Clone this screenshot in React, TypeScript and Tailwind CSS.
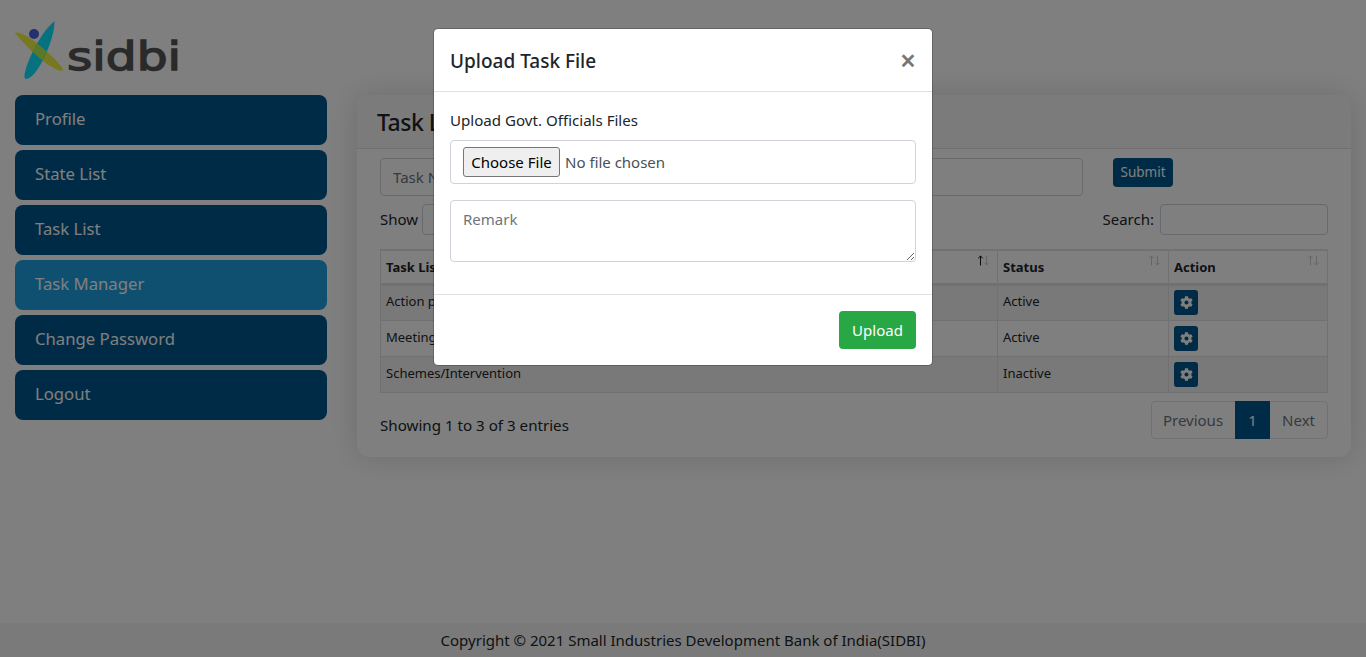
import { FaCog } from 'react-icons/fa';

const navItems = ['Profile', 'State List', 'Task List', 'Task Manager', 'Change Password', 'Logout'];

const rows = [
  { name: 'Action plan', status: 'Active' },
  { name: 'Meeting', status: 'Active' },
  { name: 'Schemes/Intervention', status: 'Inactive' },
];

function SortArrows({ active }: { active?: boolean }) {
  return (
    <svg width="13" height="11" viewBox="0 0 13 11" fill="none" strokeWidth="1" className="absolute right-[7px] top-[4px]">
      <path d="M3.5 10.5V1M1.2 3.3 3.5 1l2.3 2.3" stroke={active ? '#111' : '#ccc'} />
      <path d="M9.5.5V10M7.2 7.7 9.5 10l2.3-2.3" stroke="#ccc" />
    </svg>
  );
}

function Logo() {
  const teal = 'M39.5 4C40 22 22 62 11 62C4 62 22 18 39.5 4Z';
  const olive = 'M0 16C8 12 40 40 48 52C50 58 28 50 0 16Z';
  return (
    <svg width="170" height="65" viewBox="0 0 170 65" className="block">
      <defs>
        <clipPath id="logo-teal">
          <path d={teal} />
        </clipPath>
      </defs>
      <path d={olive} fill="#f0f03c" />
      <path d={teal} fill="#0ce4ff" />
      <path d={olive} fill="#b4f058" clipPath="url(#logo-teal)" />
      <circle cx="19" cy="17" r="5" fill="#4a60e0" />
      <text
        x="52"
        y="53"
        fontFamily="'DejaVu Sans', sans-serif"
        fontSize="39"
        textLength="114"
        lengthAdjust="spacingAndGlyphs"
        fill="#555"
        stroke="#555"
        strokeWidth="1.4"
      >
        sidbi
      </text>
    </svg>
  );
}

export default function App() {
  return (
    <div className="relative h-[657px] overflow-hidden bg-white font-['Noto_Sans','Open_Sans',sans-serif] text-[16px] text-[#212529]">
      <div className="flex h-[623px] pl-[15px] pr-[15px]">
        <aside className="w-[312px] shrink-0">
          <div className="flex h-[95px] items-end pb-[13px]">
            <Logo />
          </div>
          <nav className="flex flex-col gap-[5px]">
            {navItems.map((item) => (
              <a
                key={item}
                className={`flex h-[50px] items-center rounded-lg pb-[2px] pl-[20px] text-[16.7px] text-white ${
                  item === 'Task Manager' ? 'bg-[#1f9fe0]' : 'bg-[#00578c]'
                }`}
              >
                {item}
              </a>
            ))}
          </nav>
        </aside>

        <main className="ml-[30px] min-w-0 flex-1 pt-[95px]">
          <div className="h-[362px] rounded-xl bg-white shadow-[0_0_30px_rgba(0,0,0,0.15)]">
            <div className="flex h-[54px] items-center rounded-t-xl border-b border-[#dfdfdf] bg-[#f7f7f7] pl-[20px] pt-[2px]">
              <h4 className="text-[23px] font-medium tracking-[-0.5px]">Task List</h4>
            </div>
            <div className="px-[23px] pt-[9px]">
              <div className="flex items-start">
                <input
                  placeholder="Task Name"
                  className="h-[38px] w-[703px] rounded border border-[#ced4da] px-3 text-[15px] placeholder:text-[#6c757d]"
                />
                <button className="ml-[30px] h-[29px] w-[60px] rounded bg-[#00578c] text-[13.5px] text-white">Submit</button>
              </div>
              <div className="mt-[8px] flex h-[30px] items-center justify-between text-[15px]">
                <div className="flex items-center gap-[4px]">
                  <span>Show</span>
                  <span className="h-[31px] w-[60px] rounded border border-[#ced4da]" />
                </div>
                <div className="flex items-center gap-[6px]">
                  <span>Search:</span>
                  <input className="h-[31px] w-[168px] rounded border border-[#ced4da]" />
                </div>
              </div>
              <table className="mt-[15px] w-full table-fixed border-collapse border border-[#dee2e6] text-[13px]">
                <colgroup>
                  <col />
                  <col className="w-[171px]" />
                  <col className="w-[159px]" />
                </colgroup>
                <thead>
                  <tr className="h-[34px] border-t-2 border-b-[3px] border-[#dee2e6] font-bold">
                    <th className="relative border-r border-[#dee2e6] pl-[5px] pt-[1px] text-left">
                      Task List
                      <SortArrows active />
                    </th>
                    <th className="relative border-r border-[#dee2e6] pl-[5px] pt-[1px] text-left">
                      Status
                      <SortArrows />
                    </th>
                    <th className="relative pl-[5px] pt-[1px] text-left">
                      Action
                      <SortArrows />
                    </th>
                  </tr>
                </thead>
                <tbody>
                  {rows.map((row, i) => (
                    <tr key={row.name} className={`h-[36px] border-b border-[#dee2e6] ${i === 1 ? '' : 'bg-[#f2f2f2]'}`}>
                      <td className={`border-r border-[#dee2e6] pl-[5px] align-middle ${i === 0 ? 'pb-[2px]' : ''}`}>{row.name}</td>
                      <td className={`border-r border-[#dee2e6] pl-[5px] align-middle ${i === 0 ? 'pb-[2px]' : ''}`}>{row.status}</td>
                      <td className="pl-[5px] align-middle">
                        <span className="flex h-[25px] w-[24px] items-center justify-center rounded-[3px] bg-[#00578c]">
                          <FaCog size={13} color="#fff" />
                        </span>
                      </td>
                    </tr>
                  ))}
                </tbody>
              </table>
              <div className="mt-[8px] flex items-start justify-between">
                <span className="pt-[13px] text-[15.15px]">Showing 1 to 3 of 3 entries</span>
                <div className="flex h-[38px] items-center rounded border border-[#dee2e6] text-[15px] text-[#6c757d]">
                  <span className="pl-[11px] pr-3 pt-[1px]">Previous</span>
                  <span className="flex h-[38px] w-[35px] items-center justify-center bg-[#00578c] pt-[1px] text-white">1</span>
                  <span className="px-3 pt-[1px]">Next</span>
                </div>
              </div>
            </div>
          </div>
        </main>
      </div>

      <footer className="flex h-[34px] items-center justify-center bg-[#f5f5f5] pt-[1px] text-[15px]">
        Copyright © 2021 Small Industries Development Bank of India(SIDBI)
      </footer>

      {/* modal backdrop */}
      <div className="absolute inset-0 bg-black/50" />

      <div className="absolute left-[433px] top-[28px] w-[500px] rounded-[5px] border border-black/20 bg-white bg-clip-padding">
        <div className="flex h-[63px] items-center justify-between border-b border-[#dee2e6] pl-[16px] pr-[16px]">
          <h5 className="pt-[2px] text-[19px] font-medium">Upload Task File</h5>
          <span className="text-[28px] font-semibold leading-none text-[#777]">×</span>
        </div>
        <div className="px-[16px] pt-[16px]">
          <label className="block text-[15.1px] leading-[24px]">Upload Govt. Officials Files</label>
          <div className="mt-[8px] flex h-[44px] items-center rounded border border-[#ced4da] pl-[12px] text-[#495057]">
            <button className="h-[30px] w-[97px] rounded-[3px] border border-[#767676] bg-[#efefef] text-[15px] text-black">
              Choose File
            </button>
            <span className="ml-[5px] text-[15px]">No file chosen</span>
          </div>
          <textarea
            placeholder="Remark"
            className="mt-[16px] block h-[62px] w-full rounded border border-[#ced4da] px-3 py-[7px] text-[15px] placeholder:text-[#6c757d]"
          />
        </div>
        <div className="mt-[32px] flex h-[71px] items-center justify-end border-t border-[#dee2e6] px-[16px]">
          <button className="h-[38px] w-[77px] rounded bg-[#28a745] text-[15px] text-white">Upload</button>
        </div>
      </div>
    </div>
  );
}
